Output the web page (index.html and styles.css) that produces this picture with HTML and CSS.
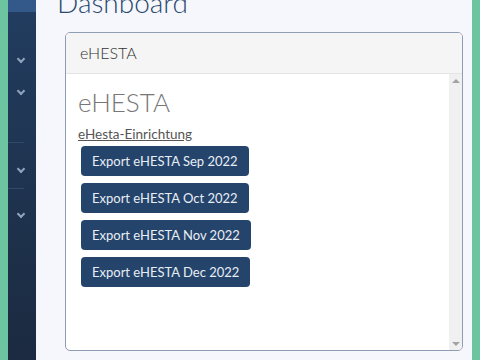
FILE: index.html
```html
<!DOCTYPE html>
<html lang="de">
<head>
  <meta charset="UTF-8">
  <title>Dashboard</title>
  <link rel="stylesheet" href="styles.css">
</head>
<body>
  <div class="frame">
    <div class="edge"></div>
    <nav class="sidebar">
      <div class="side-top"></div>
      <div class="side-item first"><span class="chev"></span></div>
      <div class="side-item"><span class="chev"></span></div>
      <div class="side-sep"></div>
      <div class="side-item"><span class="chev"></span></div>
      <div class="side-sep"></div>
      <div class="side-item"><span class="chev"></span></div>
    </nav>
    <main class="main">
      <h1 class="title">Dashboard</h1>
      <div class="card">
        <div class="card-header">eHESTA</div>
        <div class="card-body">
          <div class="content">
            <h3>eHESTA</h3>
            <a href="#" class="link">eHesta-Einrichtung</a>
            <div class="exports">
              <button class="btn">Export eHESTA Sep 2022</button>
              <button class="btn">Export eHESTA Oct 2022</button>
              <button class="btn">Export eHESTA Nov 2022</button>
              <button class="btn">Export eHESTA Dec 2022</button>
            </div>
          </div>
          <div class="scrollbar">
            <span class="arrow up"></span>
            <span class="arrow down"></span>
          </div>
        </div>
      </div>
    </main>
    <div class="edge"></div>
  </div>
</body>
</html>
```

FILE: styles.css
```css
html, body { margin: 0; height: 100%; overflow: hidden; }
body { font-family: Lato, "Noto Sans", sans-serif; background: #6cc4a0; }
.frame { display: flex; height: 360px; }
.edge { width: 8px; background: #6cc4a0; flex-shrink: 0; }

.sidebar { width: 28px; flex-shrink: 0; background: linear-gradient(#223d60, #1b2a40); display: flex; flex-direction: column; }
.side-top { height: 12px; background: #32598a; }
.side-item { height: 32px; display: flex; align-items: center; justify-content: center; padding-right: 2px; }
.side-item.first { margin-top: 32px; }
.side-sep { height: 1px; background: #2e4a6c; margin: 34px 12px 11px 0; }
.side-sep + .side-item + .side-sep { margin: 2px 12px 10px 0; }
.chev { width: 4px; height: 4px; border-right: 2px solid #8fa3bd; border-bottom: 2px solid #8fa3bd; transform: rotate(45deg); margin-top: -3px; }

.main { flex: 1; background: #f5f7fc; padding: 0 9px 0 29px; }
.title { margin: -14px 0 14px -8px; font-weight: 300; font-size: 28px; color: #2c4a6e; height: 32px; line-height: 32px; }

.card { border: 1px solid #8e9cb4; border-radius: 5px; background: #fff; height: 317px; display: flex; flex-direction: column; overflow: hidden; }
.card-header { height: 40px; line-height: 40px; padding: 0 14px; background: #f5f5f5; border-bottom: 1px solid #e4e4e4; font-size: 16px; font-weight: 300; color: #333; }
.card-body { flex: 1; display: flex; }
.content { flex: 1; padding: 12px 12px 0 12px; }
.content h3 { margin: 0; font-size: 26px; font-weight: 300; color: #777; line-height: 32px; }
.link { display: inline-block; margin-top: 8px; font-size: 13.5px; color: #555; }
.exports { display: flex; flex-direction: column; align-items: flex-start; gap: 7px; margin: 4px 0 0 3px; }
.btn { height: 30px; padding: 0 11px; background: #25446b; color: #e8eef5; border: none; border-radius: 4px; font-family: inherit; font-size: 13px; }

.scrollbar { width: 13px; background: #f0f0f0; display: flex; flex-direction: column; justify-content: space-between; align-items: center; padding: 5px 0 4px; }
.arrow { width: 0; height: 0; border-left: 4px solid transparent; border-right: 4px solid transparent; }
.arrow.up { border-bottom: 4px solid #a3a3a3; }
.arrow.down { border-top: 4px solid #a3a3a3; }
```
